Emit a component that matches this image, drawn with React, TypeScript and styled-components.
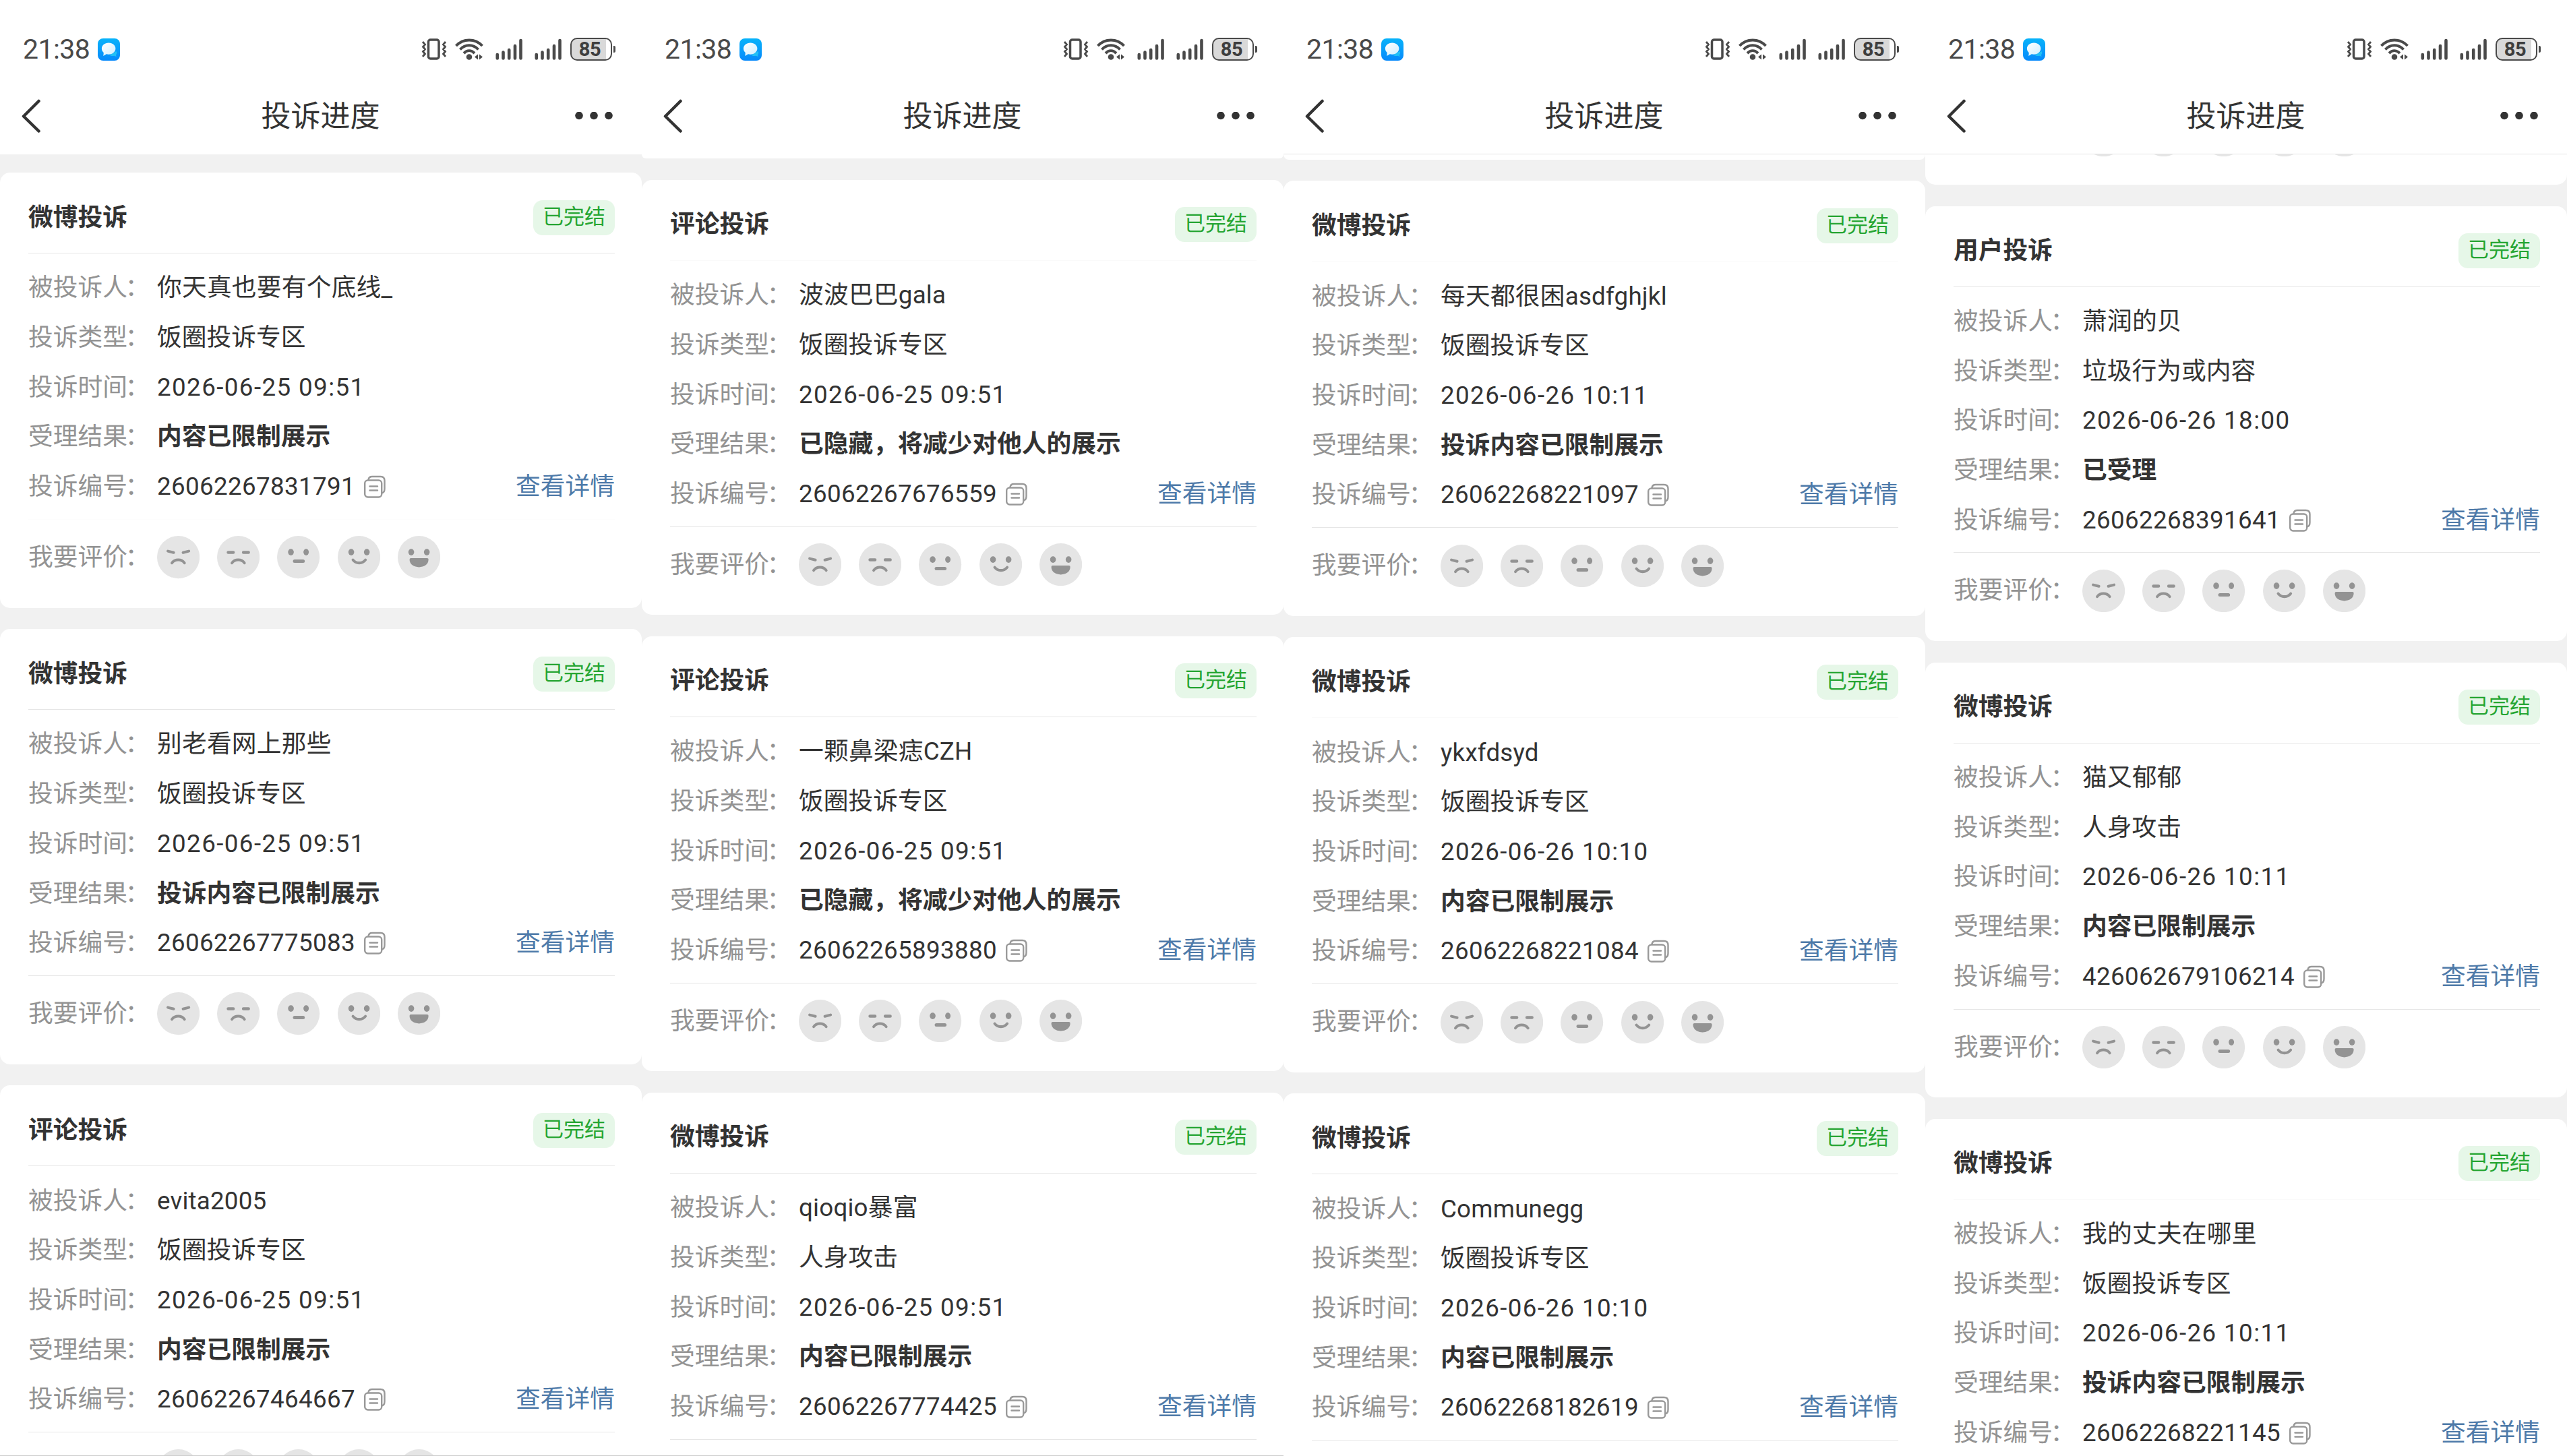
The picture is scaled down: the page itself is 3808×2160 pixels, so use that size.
import React from "react";
import styled, { createGlobalStyle } from "styled-components";

const cjk = `"Noto Sans CJK SC", sans-serif`;

const Global = createGlobalStyle`
  *, *::before, *::after { box-sizing: border-box; }
  body { margin: 0; background: #f1f1f1; font-family: Roboto, ${cjk}; }
`;

const Board = styled.main`
  display: grid;
  grid-template-columns: repeat(4, 952px);
  width: 3808px;
  height: 2160px;
  overflow: hidden;
  background: #f1f1f1;
  color: #333;
`;

const Phone = styled.section<{ $bottomLine: boolean }>`
  display: flex;
  flex-direction: column;
  height: 2160px;
  overflow: hidden;
  border-bottom: ${(p) => (p.$bottomLine ? "1px solid #ccc" : "none")};
`;

const Header = styled.header<{ $line: boolean }>`
  flex: none;
  height: 229px;
  background: #fff;
  border-bottom: 1px solid ${(p) => (p.$line ? "#e4e4e4" : "#fff")};
`;

const StatusBar = styled.div`
  display: flex;
  align-items: center;
  height: 146px;
  padding: 0 39px 0 34px;
  color: #4a4a4a;
`;

const Clock = styled.span`
  font-size: 41px;
  line-height: 48px;
  width: 111px;
  letter-spacing: -0.6px;
`;

const StatusIcons = styled.div`
  display: flex;
  align-items: center;
  margin-left: auto;
`;

const WifiIcon = styled.svg`
  margin-left: 12px;
`;

const SignalIcon = styled.svg`
  margin-left: 18px;
`;

const Battery = styled.div`
  display: flex;
  align-items: center;
  margin-left: 13px;
`;

const BatteryBody = styled.div`
  width: 62px;
  height: 34px;
  border: 2.5px solid #4a4a4a;
  border-radius: 10px;
  background: linear-gradient(90deg, #d9d9d9 88%, #fff 88%);
  display: flex;
  align-items: center;
  justify-content: center;
  padding-right: 4px;
  font: 700 29px/30px Roboto, sans-serif;
  letter-spacing: -0.3px;
  color: #3e3e3e;
`;

const BatteryTip = styled.div`
  width: 3px;
  height: 10px;
  margin-left: 2px;
  background: #4a4a4a;
  border-radius: 0 2px 2px 0;
`;

const NavBar = styled.nav`
  display: grid;
  grid-template-columns: 120px 1fr 120px;
  align-items: center;
  height: 51px;
  padding: 0 43px 0 30px;
`;

const NavTitle = styled.h1`
  margin: 0;
  padding: 3px 0 0 12px;
  text-align: center;
  font-size: 44px;
  line-height: 48px;
  font-weight: 400;
`;

const Dots = styled.svg`
  justify-self: end;
`;

const Feed = styled.div<{ $top: number }>`
  display: flex;
  flex: 1;
  flex-direction: column;
  gap: 31.5px;
  min-height: 0;
  padding-top: ${(p) => p.$top}px;
  overflow: hidden;
`;

const CardBox = styled.article`
  flex: none;
  height: 645.6px;
  padding: 0 40px 0 42px;
  border-radius: 15px;
  background: #fff;
`;

const CardTail = styled.div<{ $height: number }>`
  display: flex;
  flex: none;
  align-items: flex-end;
  height: ${(p) => p.$height}px;
  padding-left: 233px;
  border-radius: 0 0 15px 15px;
  background: #fff;
  overflow: hidden;
`;

const TailFaces = styled.div`
  padding-bottom: 42px;
`;

const CardHead = styled.div<{ $faint?: boolean }>`
  display: flex;
  align-items: center;
  justify-content: space-between;
  height: 120px;
  padding-top: 14px;
  border-bottom: 1px solid ${(p) => (p.$faint ? "#fafafa" : "#e6e6e6")};
`;

const CardTitle = styled.h2`
  margin: 0;
  font-size: 36.75px;
  line-height: 52px;
  font-weight: 700;
`;

const Badge = styled.span`
  width: 121px;
  height: 52px;
  border-radius: 14px;
  background: #e6f7e8;
  color: #25a532;
  font-size: 31px;
  line-height: 50px;
  text-align: center;
`;

const Fields = styled.div`
  padding-top: 14.5px;
`;

const Field = styled.div`
  display: flex;
  align-items: center;
  height: 73.7px;
  font-size: 36.75px;
  line-height: 52px;
`;

const Label = styled.span`
  flex: none;
  width: 191px;
  color: #939393;
  white-space: nowrap;
`;

const Colon = styled.span`
  margin-left: -3.5px;
`;

const Value = styled.span<{ $bold?: boolean; $track?: number }>`
  white-space: nowrap;
  font-weight: ${(p) => (p.$bold ? 700 : 400)};
  letter-spacing: ${(p) => p.$track ?? 0}px;
`;

const CopyIcon = styled.svg`
  margin-left: 12px;
`;

const Detail = styled.a`
  margin-left: auto;
  color: #4e7aa9;
`;

const Rating = styled.div<{ $faint?: boolean }>`
  display: flex;
  align-items: center;
  height: 113px;
  margin-top: 11px;
  border-top: 1px solid ${(p) => (p.$faint ? "#fdfdfd" : "#e6e6e6")};
  font-size: 36.75px;
  line-height: 52px;
`;

const Faces = styled.div`
  display: flex;
  flex: none;
  gap: 26px;
`;

const Wifi = () => (
  <WifiIcon width="42" height="32" viewBox="0 0 42 32" fill="none" stroke="#4a4a4a" strokeWidth="4">
    <path d="M1.5 11C12-.5 30-.5 40.5 11" />
    <path d="M7.5 16.5C15 8.300 27 8.300 34.500 16.500" />
    <path d="M13 22C18 17 24 17 29 22" />
    <circle cx="21" cy="27.500" r="4.300" fill="#4a4a4a" stroke="none" />
    <path d="M34 23.500v8l-5-4zM36 23.500v8l5-4z" fill="#4a4a4a" stroke="none" />
  </WifiIcon>
);

const Vibrate = () => (
  <svg width="38" height="32" viewBox="0 0 38 32" fill="none" stroke="#4a4a4a">
    <rect x="10.500" y="2" width="15.500" height="28" rx="3" strokeWidth="3.500" />
    <path d="M2 5l3.500 4-3 3.500 3 3.500-3 3.500 3 3.500-3.500 4M36 5l-3.500 4 3 3.500-3 3.500 3 3.500-3 3.500 3.500 4" strokeWidth="2.800" />
  </svg>
);

const Signal = () => (
  <SignalIcon width="40" height="32" viewBox="0 0 40 32" stroke="#4a4a4a" strokeWidth="4.600" strokeLinecap="round">
    <path d="M2.800 24v5.500M11.500 20.500v9M20.200 17v12.500M29 11v18.500M37.500 3v26.500" />
  </SignalIcon>
);

const ChatLogo = () => (
  <svg width="33" height="33" viewBox="0 0 33 33">
    <defs>
      <linearGradient id="chat" x1="0" y1="0" x2="0" y2="1">
        <stop offset="0" stopColor="#08b3fa" />
        <stop offset="1" stopColor="#0789fb" />
      </linearGradient>
      <linearGradient id="bubble" x1="0" y1="0" x2="1" y2="1">
        <stop offset="0" stopColor="#ffffff" />
        <stop offset="1" stopColor="#cdeeff" />
      </linearGradient>
    </defs>
    <rect width="33" height="33" rx="8" fill="url(#chat)" />
    <path d="M27.500 19c1.200 2.200.8 4.200-.6 5.400l.8 2.600-3.400-1.200c-2.500.6-5 .2-6.600-1.300z" fill="#22c0f6" />
    <path d="M16.200 6.500c5.900 0 10.200 3.800 10.200 8.600s-4.300 8.600-10.200 8.600c-1.200 0-2.400-.2-3.400-.5L8.300 26l.5-4.800c-1.800-1.500-2.900-3.700-2.900-6.100 0-4.800 4.400-8.600 10.300-8.600z" fill="url(#bubble)" />
  </svg>
);

const shapes = [
  <g key="angry">
    <path d="M16 22.500l8.500 2.200M47 22.500l-8.500 2.200" strokeWidth="4" />
    <path d="M22 40c4.500-6 14-6 18.500 0" strokeWidth="4" />
  </g>,
  <g key="sad">
    <path d="M16.500 24.500h7.500M39 24.500h7.500" strokeWidth="4.500" />
    <path d="M22 40c4.500-6 14-6 18.500 0" strokeWidth="4" />
  </g>,
  <g key="flat">
    <ellipse cx="20.500" cy="24" rx="4.300" ry="4.800" stroke="none" />
    <ellipse cx="43" cy="24" rx="4" ry="4.800" stroke="none" />
    <path d="M26 37.500h12.500" strokeWidth="5" />
  </g>,
  <g key="smile">
    <ellipse cx="20" cy="24" rx="4.300" ry="4.800" stroke="none" />
    <ellipse cx="43" cy="24" rx="4.300" ry="4.800" stroke="none" />
    <path d="M22.500 35.500c4.500 6 14 6 18.500 0" fill="none" strokeWidth="4" />
  </g>,
  <g key="laugh">
    <ellipse cx="20" cy="24" rx="4.300" ry="4.800" stroke="none" />
    <ellipse cx="43" cy="24" rx="4.300" ry="4.800" stroke="none" />
    <path d="M19.500 33h24q2 0 2 2c0 15-28 15-28 0q0-2 2-2z" stroke="none" />
  </g>,
];

const FaceRow = () => (
  <Faces>
    {shapes.map((shape, i) => (
      <svg key={i} width="63.200" height="63.200" viewBox="0 0 63 63" strokeLinecap="round">
        <circle cx="31.500" cy="31.500" r="31.500" fill="#e5e5e5" />
        <g fill={i < 2 ? "none" : "#939393"} stroke="#939393">
          {shape}
        </g>
      </svg>
    ))}
  </Faces>
);

const Copy = () => (
  <CopyIcon width="34" height="34" viewBox="0 0 34 34" fill="none" stroke="#999" strokeWidth="2.400" strokeLinecap="round">
    <rect x="2.200" y="7.500" width="25" height="25" rx="4.500" />
    <path d="M7.500 6.500q.8-4.500 5.500-4.500h12.500q6 0 6 6v12q0 5-3 6M9.500 16.500h11.500M9.500 22.500h11.500" />
  </CopyIcon>
);

type Complaint = {
  title: string;
  who: string;
  kind: string;
  time: string;
  result: string;
  id: string;
  faintHead?: boolean;
  faintFoot?: boolean;
};

const c = (
  title: string,
  who: string,
  kind: string,
  time: string,
  result: string,
  id: string,
  faintHead = false,
  faintFoot = false,
): Complaint => ({ title, who, kind, time, result, id, faintHead, faintFoot });

const FAN = "饭圈投诉专区";
const LIMITED = "内容已限制展示";

type PhoneData = {
  top?: number;
  tail?: number;
  line?: boolean;
  bottomLine?: boolean;
  cards: Complaint[];
};

const phones: PhoneData[] = [
  {
    top: 27,
    bottomLine: true,
    cards: [
      c("微博投诉", "你天真也要有个底线_", FAN, "2026-06-25 09:51", LIMITED, "26062267831791", false, true),
      c("微博投诉", "别老看网上那些", FAN, "2026-06-25 09:51", "投诉" + LIMITED, "26062267775083"),
      c("评论投诉", "evita2005", FAN, "2026-06-25 09:51", LIMITED, "26062267464667"),
    ],
  },
  {
    tail: 6.3,
    bottomLine: true,
    cards: [
      c("评论投诉", "波波巴巴gala", FAN, "2026-06-25 09:51", "已隐藏，将减少对他人的展示", "26062267676559", true),
      c("评论投诉", "一颗鼻梁痣CZH", FAN, "2026-06-25 09:51", "已隐藏，将减少对他人的展示", "26062265893880"),
      c("微博投诉", "qioqio暴富", "人身攻击", "2026-06-25 09:51", LIMITED, "26062267774425"),
    ],
  },
  {
    tail: 7.7,
    line: true,
    cards: [
      c("微博投诉", "每天都很困asdfghjkl", FAN, "2026-06-26 10:11", "投诉" + LIMITED, "26062268221097", true),
      c("微博投诉", "ykxfdsyd", FAN, "2026-06-26 10:10", LIMITED, "26062268221084", true),
      c("微博投诉", "Communegg", FAN, "2026-06-26 10:10", LIMITED, "26062268182619"),
    ],
  },
  {
    tail: 45,
    line: true,
    cards: [
      c("用户投诉", "萧润的贝", "垃圾行为或内容", "2026-06-26 18:00", "已受理", "26062268391641"),
      c("微博投诉", "猫又郁郁", "人身攻击", "2026-06-26 10:11", LIMITED, "426062679106214"),
      c("微博投诉", "我的丈夫在哪里", FAN, "2026-06-26 10:11", "投诉" + LIMITED, "26062268221145", true),
    ],
  },
];

const FieldLabel = ({ children }: { children: string }) => (
  <Label>
    {children}
    <Colon>：</Colon>
  </Label>
);

const Card = ({ item }: { item: Complaint }) => (
  <CardBox>
    <CardHead $faint={item.faintHead}>
      <CardTitle>{item.title}</CardTitle>
      <Badge>已完结</Badge>
    </CardHead>
    <Fields>
      <Field>
        <FieldLabel>被投诉人</FieldLabel>
        <Value $track={0.2}>{item.who}</Value>
      </Field>
      <Field>
        <FieldLabel>投诉类型</FieldLabel>
        <Value>{item.kind}</Value>
      </Field>
      <Field>
        <FieldLabel>投诉时间</FieldLabel>
        <Value $track={1.4}>{item.time}</Value>
      </Field>
      <Field>
        <FieldLabel>受理结果</FieldLabel>
        <Value $bold>{item.result}</Value>
      </Field>
      <Field>
        <FieldLabel>投诉编号</FieldLabel>
        <Value $track={0.35}>{item.id}</Value>
        <Copy />
        <Detail>查看详情</Detail>
      </Field>
    </Fields>
    <Rating $faint={item.faintFoot}>
      <FieldLabel>我要评价</FieldLabel>
      <FaceRow />
    </Rating>
  </CardBox>
);

export default function App() {
  return (
    <>
      <Global />
      <Board>
        {phones.map((phone, i) => (
          <Phone key={i} $bottomLine={!!phone.bottomLine}>
            <Header $line={!!phone.line}>
              <StatusBar>
                <Clock>21:38</Clock>
                <ChatLogo />
                <StatusIcons>
                  <Vibrate />
                  <Wifi />
                  <Signal />
                  <Signal />
                  <Battery>
                    <BatteryBody>85</BatteryBody>
                    <BatteryTip />
                  </Battery>
                </StatusIcons>
              </StatusBar>
              <NavBar>
                <svg width="32" height="50" viewBox="0 0 32 50" fill="none" stroke="#333" strokeWidth="4.500" strokeLinecap="round" strokeLinejoin="round">
                  <path d="M27.500 3L5 25.500 27.500 47.500" />
                </svg>
                <NavTitle>投诉进度</NavTitle>
                <Dots width="56" height="12" viewBox="0 0 56 12" fill="#333">
                  <circle cx="6" cy="5.500" r="5.800" />
                  <circle cx="28" cy="5.500" r="5.800" />
                  <circle cx="50" cy="5.500" r="5.800" />
                </Dots>
              </NavBar>
            </Header>
            <Feed $top={phone.top ?? 0}>
              {phone.tail && (
                <CardTail $height={phone.tail}>
                  {phone.tail > 42 && (
                    <TailFaces>
                      <FaceRow />
                    </TailFaces>
                  )}
                </CardTail>
              )}
              {phone.cards.map((item, k) => (
                <Card key={k} item={item} />
              ))}
            </Feed>
          </Phone>
        ))}
      </Board>
    </>
  );
}
